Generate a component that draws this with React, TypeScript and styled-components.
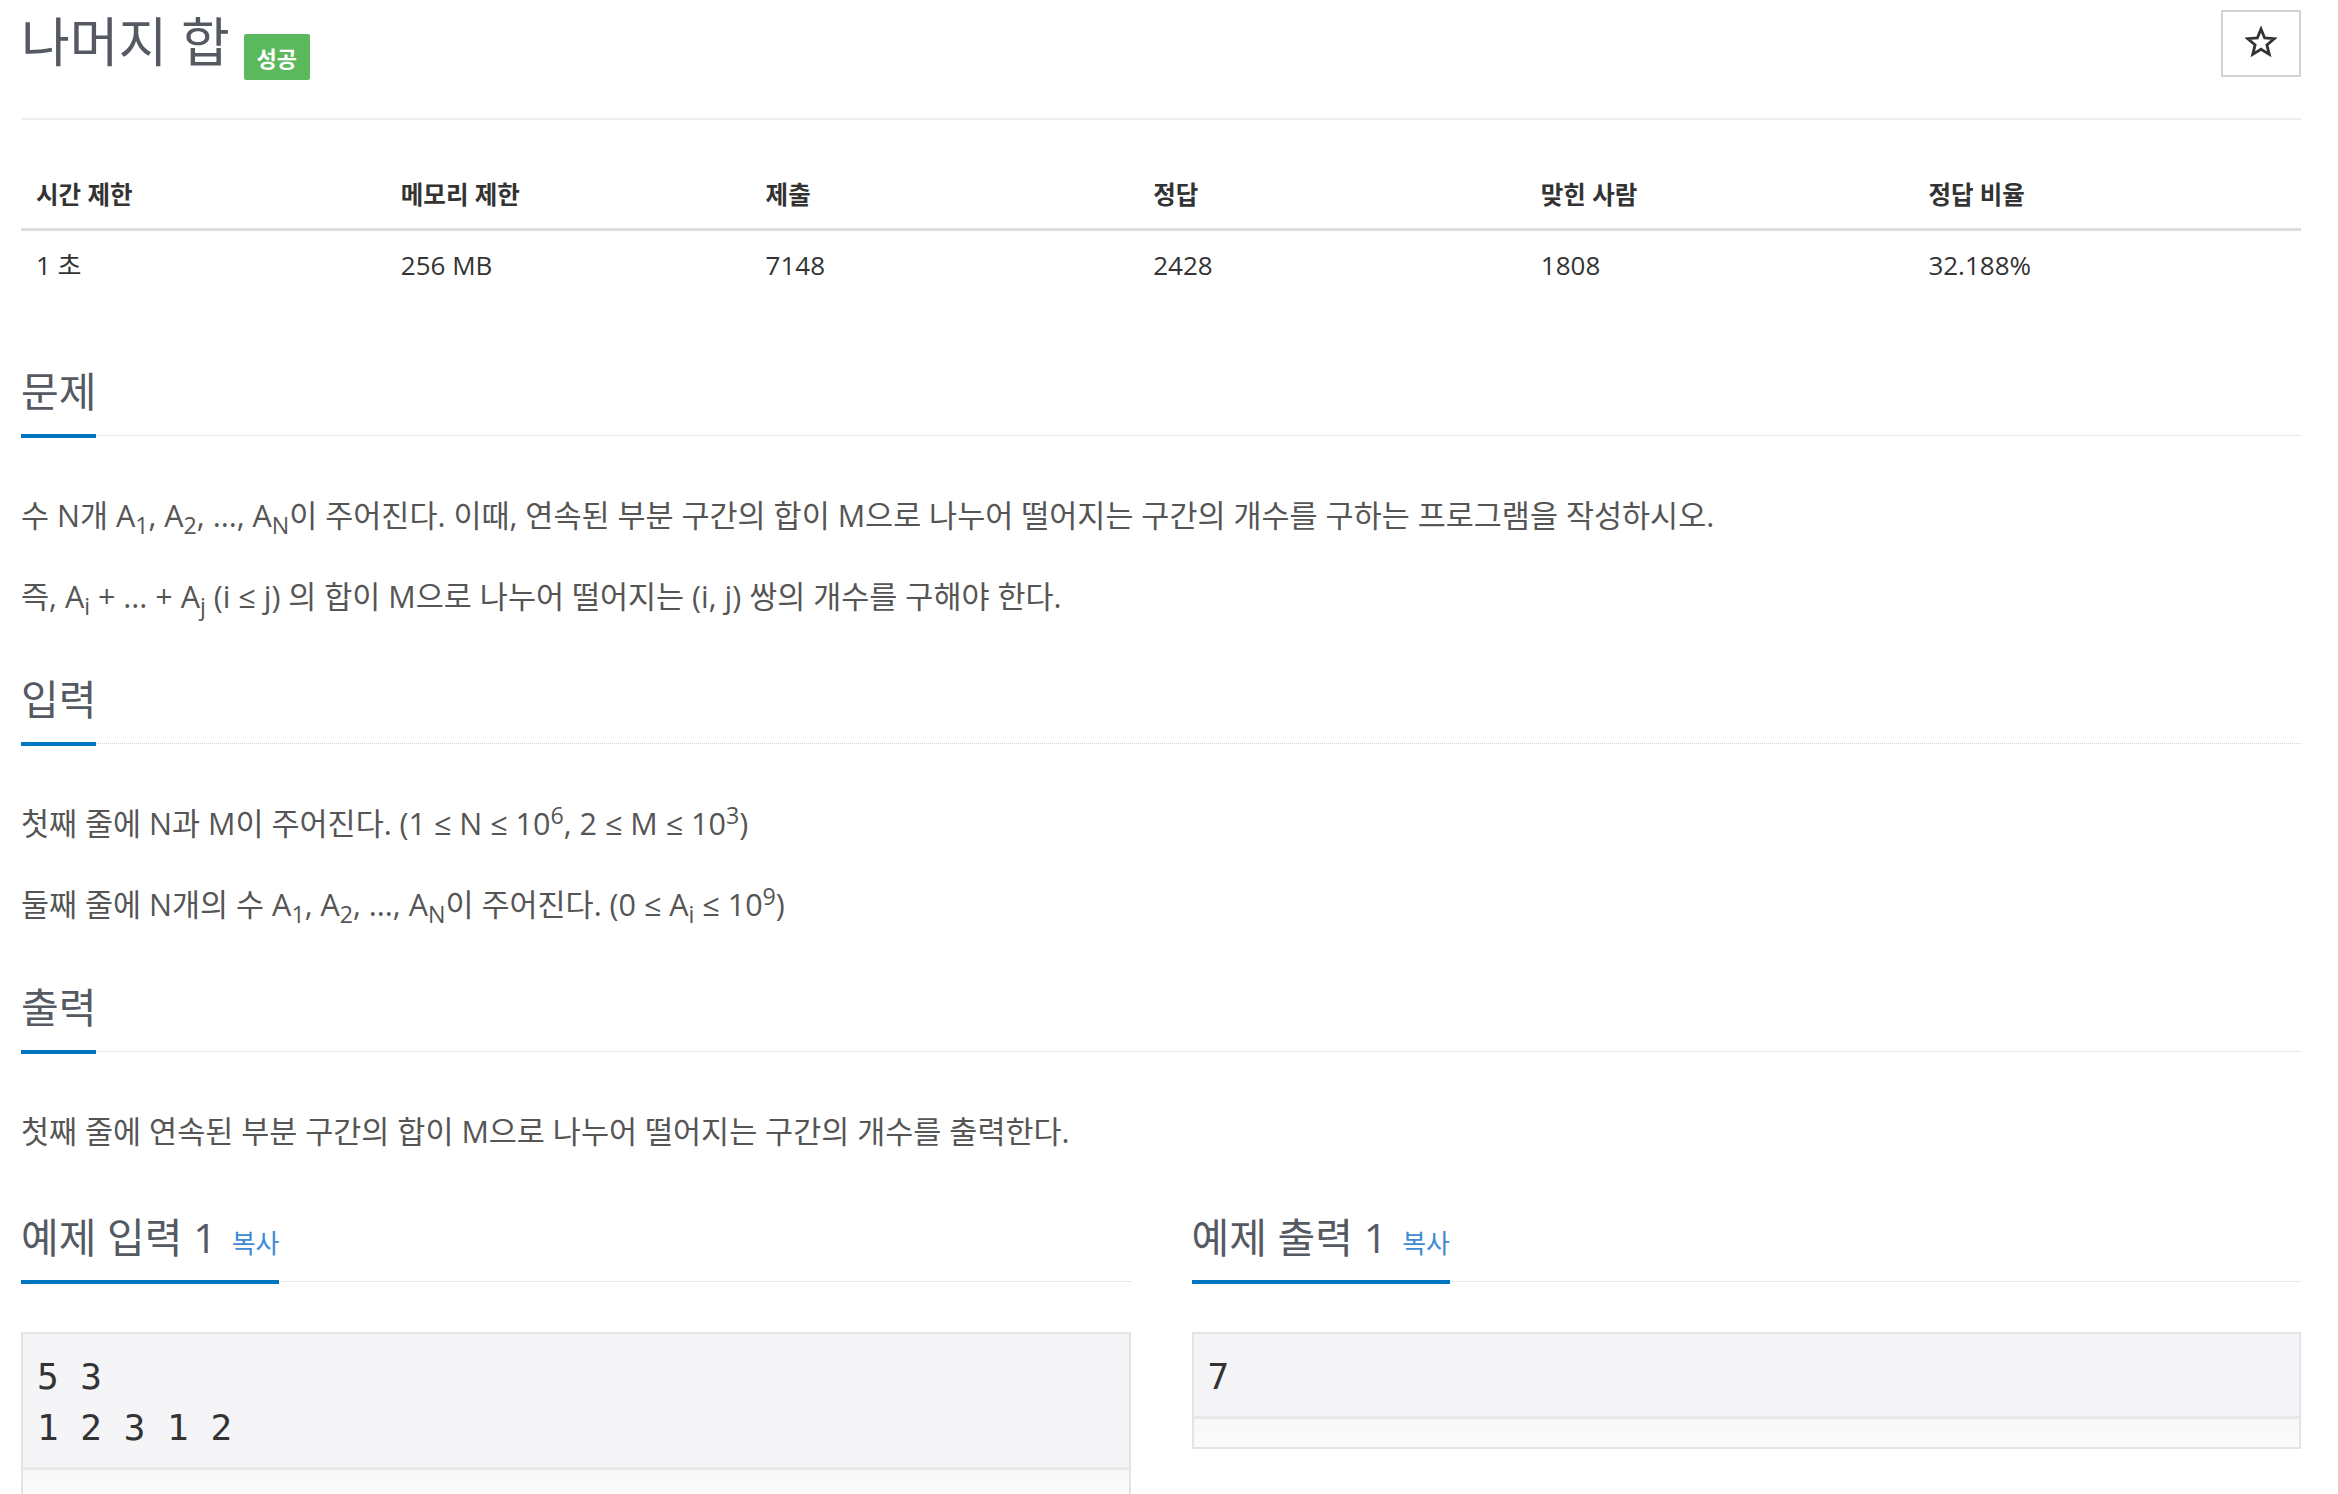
import React from "react";
import styled, { createGlobalStyle } from "styled-components";

const GlobalStyle = createGlobalStyle`
  html, body {
    margin: 0;
    padding: 0;
    background: #ffffff;
    overflow: hidden;
  }
  body {
    font-family: "Open Sans", "Noto Sans CJK KR", sans-serif;
    color: #333333;
  }
`;

const infoHeads = ["시간 제한", "메모리 제한", "제출", "정답", "맞힌 사람", "정답 비율"];
const infoValues = ["1 초", "256 MB", "7148", "2428", "1808", "32.188%"];
const colWidths = [16, 16, 17, 17, 17, 17];

const samples = [
  { title: "예제 입력 1", data: "5 3\n1 2 3 1 2" },
  { title: "예제 출력 1", data: "7" },
];

export default function App() {
  return (
    <>
      <GlobalStyle />
      <Page>
        {/* Title bar */}
        <PageHeader>
          <TitleGroup>
            <Title>나머지 합</Title>
            <Badge>성공</Badge>
          </TitleGroup>
          <StarButton aria-label="즐겨찾기">
            <svg width="32" height="32" viewBox="0 0 32 32">
              <polygon
                points="16,3 19.64,11.98 29.31,12.67 21.9,18.92 24.23,28.33 16,23.2 7.77,28.33 10.1,18.92 2.69,12.67 12.36,11.98"
                fill="none"
                stroke="#333"
                strokeWidth="2.8"
                strokeLinejoin="miter"
              />
            </svg>
          </StarButton>
        </PageHeader>

        {/* Limits / stats */}
        <InfoTable>
          <colgroup>
            {colWidths.map((w, i) => (
              <col key={i} style={{ width: `${w}%` }} />
            ))}
          </colgroup>
          <thead>
            <tr>
              {infoHeads.map((h) => (
                <Th key={h}>{h}</Th>
              ))}
            </tr>
          </thead>
          <tbody>
            <tr>
              {infoValues.map((v) => (
                <Td key={v}>{v}</Td>
              ))}
            </tr>
          </tbody>
        </InfoTable>

        <Section $gap={68}>
          <Headline>
            <SectionTitle>문제</SectionTitle>
          </Headline>
          <SectionBody>
            <Para>
              수 N개 A<sub>1</sub>, A<sub>2</sub>, ..., A<sub>N</sub>이 주어진다. 이때, 연속된 부분 구간의 합이
              M으로 나누어 떨어지는 구간의 개수를 구하는 프로그램을 작성하시오.
            </Para>
            <Para>
              즉, A<sub>i</sub> + ... + A<sub>j</sub> (i ≤ j) 의 합이 M으로 나누어 떨어지는 (i, j) 쌍의 개수를
              구해야 한다.
            </Para>
          </SectionBody>
        </Section>

        <Section $gap={58}>
          <Headline>
            <SectionTitle>입력</SectionTitle>
          </Headline>
          <SectionBody>
            <Para>
              첫째 줄에 N과 M이 주어진다. (1 ≤ N ≤ 10<sup>6</sup>, 2 ≤ M ≤ 10<sup>3</sup>)
            </Para>
            <Para>
              둘째 줄에 N개의 수 A<sub>1</sub>, A<sub>2</sub>, ..., A<sub>N</sub>이 주어진다. (0 ≤ A
              <sub>i</sub> ≤ 10<sup>9</sup>)
            </Para>
          </SectionBody>
        </Section>

        <Section $gap={58}>
          <Headline>
            <SectionTitle>출력</SectionTitle>
          </Headline>
          <SectionBody>
            <Para>첫째 줄에 연속된 부분 구간의 합이 M으로 나누어 떨어지는 구간의 개수를 출력한다.</Para>
          </SectionBody>
        </Section>

        <SampleGrid>
          {samples.map((s) => (
            <SampleColumn key={s.title}>
              <Headline>
                <SectionTitle>
                  {s.title}
                  <CopyLink>복사</CopyLink>
                </SectionTitle>
              </Headline>
              <SampleBox>
                <SampleData>{s.data}</SampleData>
                <ScrollTrack />
              </SampleBox>
            </SampleColumn>
          ))}
        </SampleGrid>
      </Page>
    </>
  );
}

/* ── Page ── */
const Page = styled.div`
  width: 2280px;
  margin-left: 21px;
`;

/* ── Header ── */
const PageHeader = styled.div`
  display: flex;
  justify-content: space-between;
  align-items: flex-start;
  height: 70px;
  padding: 10px 0 38px;
  border-bottom: 2px solid #eeeeee;
`;

const TitleGroup = styled.div`
  display: flex;
  align-items: flex-start;
`;

const Title = styled.h1`
  margin: 2px 0 0;
  font-size: 53px;
  font-weight: 400;
  line-height: 60px;
  color: #555a62;
`;

const Badge = styled.span`
  display: flex;
  align-items: center;
  justify-content: center;
  margin: 24px 0 0 14px;
  width: 66px;
  height: 46px;
  background: #5cb85c;
  border-radius: 2px;
  color: #ffffff;
  font-size: 22px;
  font-weight: 700;
`;

const StarButton = styled.button`
  display: flex;
  align-items: center;
  justify-content: center;
  width: 80px;
  height: 67px;
  padding: 0 0 3px;
  background: #ffffff;
  border: 2px solid #d2d2d2;
  border-radius: 1px;
  cursor: pointer;
`;

/* ── Info table ── */
const InfoTable = styled.table`
  width: 100%;
  margin-top: 40px;
  border-collapse: collapse;
  table-layout: fixed;
`;

const Th = styled.th`
  padding: 20px 15px 18px;
  text-align: left;
  font-size: 24.5px;
  font-weight: 700;
  line-height: 30px;
  color: #333333;
  border-bottom: 3px solid #dddddd;
`;

const Td = styled.td`
  padding: 19px 15px 21px;
  font-size: 26px;
  line-height: 30px;
  color: #333333;
`;

/* ── Sections ── */
const Section = styled.section<{ $gap: number }>`
  margin-top: ${({ $gap }) => $gap}px;
`;

const Headline = styled.div`
  display: flex;
  border-bottom: 1px dotted #cfd4da;
`;

const SectionTitle = styled.h2`
  margin: 0 0 -3px;
  padding-bottom: 20px;
  font-size: 41px;
  font-weight: 400;
  line-height: 45px;
  height: 45px;
  color: #555a62;
  border-bottom: 4px solid #0076c0;
  white-space: nowrap;
`;

const CopyLink = styled.span`
  margin-left: 15px;
  font-size: 26px;
  line-height: 0;
  color: #3d8bd4;
  cursor: pointer;
`;

const SectionBody = styled.div`
  padding-top: 57px;
`;

const Para = styled.p`
  margin: 0 0 36px;
  font-size: 30.5px;
  line-height: 45px;
  color: #555555;

  &:last-child {
    margin-bottom: 0;
  }

  sub,
  sup {
    font-size: 0.76em;
    line-height: 0;
  }
`;

/* ── Samples ── */
const SampleGrid = styled.div`
  display: grid;
  grid-template-columns: 1fr 1fr;
  column-gap: 61px;
  margin-top: 61px;
`;

const SampleColumn = styled.div`
  display: flex;
  flex-direction: column;
`;

const SampleBox = styled.div`
  margin-top: 50px;
  background: #f5f5f7;
  border: 2px solid #e3e3e8;
`;

const SampleData = styled.pre`
  margin: 0;
  padding: 17px 14px 14px;
  font-family: "DejaVu Sans Mono", monospace;
  font-size: 36px;
  line-height: 51px;
  color: #333333;
`;

const ScrollTrack = styled.div`
  height: 28px;
  border-top: 3px solid #e8e8e8;
  background: linear-gradient(#f7f7f7, #fbfbfb);
`;
